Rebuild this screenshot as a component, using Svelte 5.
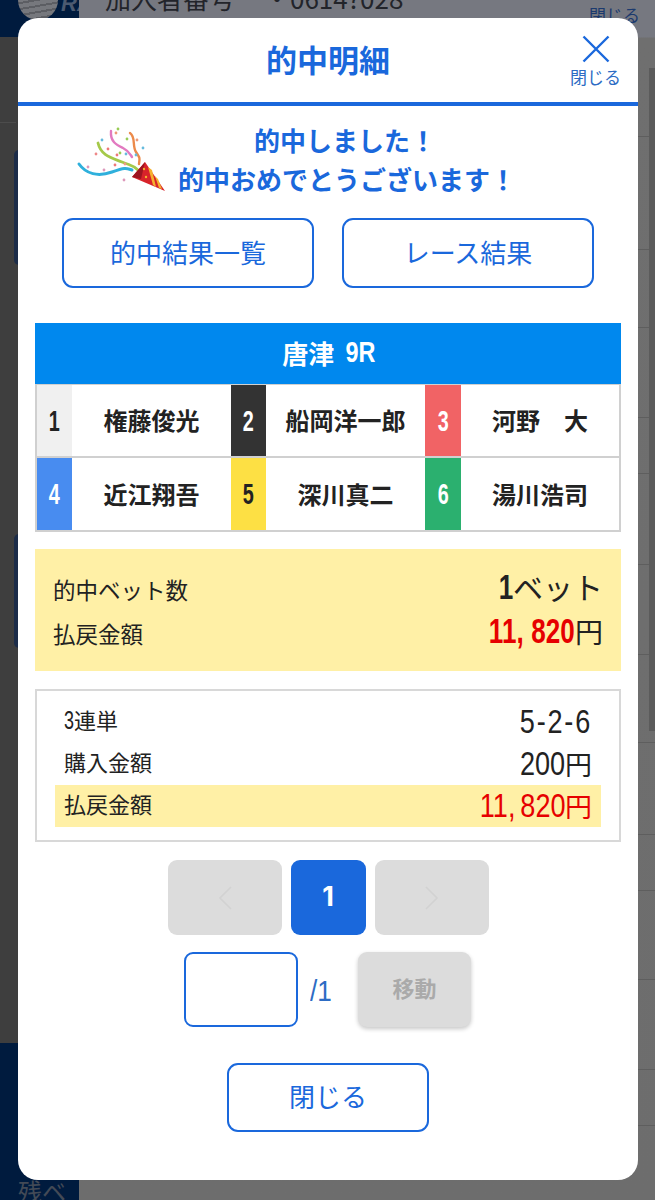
<script>
  const racers = [
    { no: 1, name: '権藤俊光', cls: 'c1' },
    { no: 2, name: '船岡洋一郎', cls: 'c2' },
    { no: 3, name: '河野　大', cls: 'c3' },
    { no: 4, name: '近江翔吾', cls: 'c4' },
    { no: 5, name: '深川真二', cls: 'c5' },
    { no: 6, name: '湯川浩司', cls: 'c6' },
  ];
  const confetti = [
    [36, 39, '#e88'], [42, 25, '#6bd'], [48, 34, '#e77'], [58, 14, '#9c5'], [57, 40, '#e77'],
    [28, 52, '#d9b'], [44, 55, '#d9b'], [64, 65, '#d9b'], [55, 50, '#e77'], [65, 49, '#e98'],
    [60, 38, '#9c5'], [67, 24, '#9c5'], [66, 39, '#6bd'], [76, 40, '#6bd'], [83, 33, '#6bd'],
    [56, 18, '#e97'], [77, 25, '#e97'],
  ];
  const lines = [136, 249, 327, 417, 473, 564, 654, 742, 834, 890, 979, 1069, 1125];
</script>

<div class="page">
  <div class="rail">
    <div class="rail-top">
      <span class="logo"></span>
      <span class="logo-text">RA</span>
    </div>
    <div class="rail-mid">
      <i class="edge e1"></i>
      <i class="edge e2"></i>
      <i class="rail-rule"></i>
    </div>
    <div class="rail-foot"><span class="foot-text">残ベ</span></div>
  </div>
  <div class="main">
    <div class="main-top">
      <span class="member">加入者番号</span>
      <span class="member-no">・0614?028</span>
      <span class="back-close">閉じる</span>
    </div>
    {#each lines as y}
      <i class="rule" style="top:{y}px"></i>
    {/each}
    <i class="side-panel"></i>
  </div>
</div>

<div class="modal">
  <header class="head">
    <h1>的中明細</h1>
    <button class="x">
      <svg width="30" height="30" viewBox="0 0 30 30" aria-hidden="true">
        <path d="M2.5 2.5 27.5 27.5M27.5 2.5 2.5 27.5" fill="none" stroke="#1a68dc" stroke-width="2.4" />
      </svg>
      <span>閉じる</span>
    </button>
  </header>

  <div class="body">
    <div class="congrats">
      <svg class="popper" width="118" height="85" viewBox="0 0 118 85" aria-hidden="true">
        <g fill="none" stroke-width="2.4" stroke-linecap="round">
          <path d="M19 49C26 59 38 62 52 57S66 53 72 55" stroke="#2fb0dc" stroke-width="3" />
          <path d="M38 28C41 41 52 43 62 47S73 50 78 55" stroke="#a5c94a" stroke-width="2.8" />
          <path d="M51 16C50 27 57 30 63 33S70 39 72 42" stroke="#e27ac0" />
          <path d="M70 18C76 22 72 31 76 37S80 43 79 49" stroke="#ec8a4a" />
        </g>
        {#each confetti as [x, y, fill]}
          <circle cx={x} cy={y} r="1.4" {fill} />
        {/each}
        <path d="M72 62 85 47 105 76Z" fill="#d8232a" />
        <path d="M72 62 85 47 81 64Z" fill="#9e1420" />
        <path d="M88 52 92 55 96 72 93 70ZM95 61 98 64 102 74 99 73Z" fill="#f5b12e" />
        <circle cx="84" cy="54" r="1.2" fill="#f5b12e" />
        <circle cx="86" cy="62" r="1.2" fill="#f5b12e" />
      </svg>
      <p>的中しました！<br />的中おめでとうございます！</p>
    </div>

    <div class="links">
      <button class="outline">的中結果一覧</button>
      <button class="outline">レース結果</button>
    </div>

    <div class="race">唐津<span class="narrow race-no">9R</span></div>
    <div class="racers">
      {#each racers as r}
        <div class="no {r.cls}"><span class="narrow">{r.no}</span></div>
        <div class="name">{r.name}</div>
      {/each}
    </div>

    <div class="summary">
      <div class="line">
        <span>的中ベット数</span>
        <span class="big"><b class="narrow one">1</b>ベット</span>
      </div>
      <div class="line">
        <span>払戻金額</span>
        <span class="big"><b class="narrow red">11<i class="comma">,</i>820</b><span class="yen">円</span></span>
      </div>
    </div>

    <div class="detail">
      <div class="row"><span class="label"><span class="narrow three">3</span>連単</span><span class="val"><span class="narrow combo">5-2-6</span></span></div>
      <div class="row"><span class="label">購入金額</span><span class="val"><span class="narrow">200</span>円</span></div>
      <div class="row hit"><span class="label">払戻金額</span><span class="val red"><span class="narrow">11<i class="comma thin">,</i>820</span>円</span></div>
    </div>

    <div class="pager">
      <button class="pg wide" aria-label="前へ">
        <svg width="16" height="26" viewBox="0 0 16 26"><path d="M14 2 3 13 14 24" fill="none" stroke="#d2d2d2" stroke-width="1.6" /></svg>
      </button>
      <button class="pg cur">1</button>
      <button class="pg wide" aria-label="次へ">
        <svg width="16" height="26" viewBox="0 0 16 26"><path d="M2 2 13 13 2 24" fill="none" stroke="#d2d2d2" stroke-width="1.6" /></svg>
      </button>
    </div>

    <div class="jump">
      <input type="text" aria-label="ページ" />
      <span class="total"><span class="narrow">/1</span></span>
      <button class="go">移動</button>
    </div>

    <button class="outline close">閉じる</button>
  </div>
</div>

<style>
  :global(body) {
    margin: 0;
    background: #6b6b6b;
    font-family: "Noto Sans CJK JP", "Noto Sans", sans-serif;
  }

  .page {
    display: flex;
    width: 655px;
    height: 1200px;
    overflow: hidden;
  }

  .rail {
    width: 79px;
    display: flex;
    flex-direction: column;
    flex: none;
  }
  .rail-top {
    position: relative;
    height: 37px;
    background: #001b3e;
    overflow: hidden;
  }
  .logo {
    position: absolute;
    left: 18px;
    top: -20px;
    width: 40px;
    height: 40px;
    border-radius: 50%;
    background: repeating-linear-gradient(170deg, #76787d 0 4px, #5c5e63 4px 6px);
  }
  .logo-text {
    position: absolute;
    left: 61px;
    top: -9px;
    color: #4c5a70;
    font: italic 700 22px "Liberation Sans", sans-serif;
  }
  .rail-mid {
    position: relative;
    flex: 1;
    background: #3e3e3e;
  }
  .rail-rule {
    position: absolute;
    left: 0;
    width: 16px;
    top: 85px;
    height: 1px;
    background: #4c4c4c;
  }
  .edge {
    position: absolute;
    left: 14px;
    width: 6px;
    border-radius: 5px 0 0 5px;
    background: #1c2c48;
  }
  .e1 { top: 113px; height: 115px; }
  .e2 { top: 497px; height: 114px; }
  .rail-foot {
    height: 157px;
    background: #001b3e;
    position: relative;
    overflow: hidden;
  }
  .foot-text {
    position: absolute;
    left: 18px;
    bottom: -8px;
    color: #434a56;
    font-size: 24px;
  }

  .main {
    flex: 1;
    position: relative;
    background: linear-gradient(#767880 0, #767880 37px, #6f6f6f 38px, #6d6d6d 100%);
  }
  .main-top {
    height: 37px;
    position: relative;
    overflow: hidden;
  }
  .member, .member-no {
    position: absolute;
    top: -21px;
    font-size: 26px;
    color: #22242a;
    white-space: nowrap;
  }
  .member { left: 26px; }
  .member-no { left: 185px; }
  .back-close {
    position: absolute;
    right: 15px;
    top: 2px;
    font-size: 17px;
    color: #1c3a6e;
  }
  .rule {
    position: absolute;
    left: 0;
    right: 0;
    height: 1px;
    background: #5e5e5e;
  }
  .side-panel {
    position: absolute;
    right: 0;
    top: 68px;
    width: 6px;
    height: 663px;
    background: #5b5b5b;
  }

  .modal {
    position: absolute;
    left: 18px;
    top: 18px;
    width: 620px;
    height: 1162px;
    background: #fff;
    border-radius: 20px;
    overflow: hidden;
  }

  .head {
    position: relative;
    height: 84px;
    border-bottom: 4px solid #1a68dc;
    display: flex;
    align-items: center;
    justify-content: center;
  }
  h1 {
    margin: 0 0 4px;
    font-size: 31px;
    font-weight: 700;
    color: #1a68dc;
  }
  .x {
    position: absolute;
    right: 17px;
    top: 16px;
    padding: 0;
    border: 0;
    background: none;
    display: flex;
    flex-direction: column;
    align-items: center;
    gap: 3px;
    font-family: inherit;
    font-size: 17px;
    line-height: 20px;
    color: #2d6cc4;
  }

  .body {
    padding: 0 17px;
    display: flex;
    flex-direction: column;
    align-items: stretch;
  }

  .congrats {
    display: flex;
    align-items: flex-start;
    padding: 14px 0 0 25px;
    height: 94px;
  }
  .popper {
    margin-top: -5px;
    flex: none;
  }
  .congrats p {
    margin: 0;
    width: 334px;
    text-align: center;
    font-size: 26px;
    line-height: 39px;
    font-weight: 700;
    color: #1a68dc;
    white-space: nowrap;
  }

  .links {
    display: flex;
    justify-content: center;
    gap: 28px;
    margin-top: 4px;
  }
  .outline {
    box-sizing: border-box;
    width: 252px;
    height: 70px;
    border: 2px solid #1a68dc;
    border-radius: 11px;
    background: #fff;
    color: #1a68dc;
    font-family: inherit;
    font-size: 26px;
    padding: 0 0 4px;
  }

  .race {
    box-sizing: border-box;
    margin-top: 35px;
    height: 61px;
    padding: 0 0 3px 2px;
    background: #0088ee;
    color: #fff;
    font-size: 26px;
    font-weight: 700;
    display: flex;
    align-items: center;
    justify-content: center;
  }
  .race-no {
    font-size: 30px;
    margin-left: 3px;
    transform: scaleX(0.66);
  }

  /* no condensed face is installed, so digits are squeezed to the reference's width */
  .narrow {
    display: inline-block;
    font-family: "Liberation Sans", sans-serif;
    font-style: normal;
    transform: scaleX(0.78);
    transform-origin: right center;
  }
  .comma {
    font-style: normal;
    margin-right: 10px;
  }
  .comma.thin {
    margin-right: 6px;
  }

  .racers {
    display: grid;
    grid-template-columns: 35px 159px 35px 159px 36px 1fr;
    grid-template-rows: 71px 72px;
    row-gap: 2px;
    border: 2px solid #d0d0d0;
    border-top-width: 1px;
    background: #d0d0d0;
  }
  .no {
    display: flex;
    align-items: center;
    justify-content: center;
    font-size: 30px;
    font-weight: 700;
  }
  .no .narrow {
    transform: scaleX(0.66);
    transform-origin: center;
  }
  .c1 { background: #f0f0f0; color: #222; }
  .c2 { background: #333; color: #fff; }
  .c3 { background: #f16365; color: #fff; }
  .c4 { background: #488cf0; color: #fff; }
  .c5 { background: #fde044; color: #222; }
  .c6 { background: #2bb06f; color: #fff; }
  .name {
    background: #fff;
    display: flex;
    align-items: center;
    justify-content: center;
    padding-bottom: 2px;
    font-size: 24px;
    font-weight: 700;
    color: #222;
    white-space: nowrap;
  }

  .summary {
    margin-top: 17px;
    height: 122px;
    box-sizing: border-box;
    background: #fff0a6;
    padding: 18px 18px 0;
    color: #222;
    font-size: 22.5px;
  }
  .line {
    display: flex;
    align-items: center;
    justify-content: space-between;
    height: 44px;
  }
  .big {
    font-size: 30px;
    line-height: 44px;
    white-space: nowrap;
    margin-top: -5px;
  }
  .big b {
    font-size: 34.5px;
    line-height: 44px;
    transform: scaleX(0.755);
  }
  .yen {
    font-size: 28px;
  }
  .red { color: #e60000; }

  .detail {
    margin-top: 18px;
    height: 153px;
    box-sizing: border-box;
    border: 2px solid #d8d8d8;
    padding: 10px 18px 0;
    color: #222;
    font-size: 22px;
  }
  .row {
    display: flex;
    align-items: center;
    justify-content: space-between;
    height: 42px;
    padding: 0 9px;
  }
  .row.hit {
    background: #fff0a6;
  }
  .label {
    margin-top: -6px;
    white-space: nowrap;
  }
  .three {
    font-size: 25px;
    line-height: 25px;
    transform: scaleX(0.72);
    margin-left: -4px;
  }
  .val {
    font-size: 27px;
    line-height: 42px;
    white-space: nowrap;
  }
  .val .narrow {
    font-size: 33px;
    line-height: 42px;
    transform: scaleX(0.82);
  }
  .val .combo {
    letter-spacing: 2.2px;
  }

  .pager {
    display: flex;
    justify-content: center;
    gap: 9px;
    margin-top: 18px;
  }
  .pg {
    height: 75px;
    width: 75px;
    border: 0;
    border-radius: 9px;
    padding: 0;
    display: flex;
    align-items: center;
    justify-content: center;
  }
  .pg.wide {
    width: 114px;
    background: #dcdcdc;
  }
  .pg.cur {
    background: #1a68dc;
    color: #fff;
    padding-bottom: 3px;
    font: 700 27px "Inter", sans-serif;
  }

  .jump {
    display: flex;
    align-items: center;
    margin: 17px 0 0 149px;
  }
  .jump input {
    box-sizing: border-box;
    width: 114px;
    height: 75px;
    border: 2px solid #1a68dc;
    border-radius: 9px;
    background: #fff;
    padding: 0;
  }
  .total {
    width: 60px;
    padding: 0 0 3px 12px;
    box-sizing: border-box;
    font-size: 29px;
    color: #2d6cc4;
  }
  .total .narrow {
    transform: scaleX(0.9);
    transform-origin: left center;
  }
  .go {
    width: 113px;
    height: 75px;
    border: 0;
    border-radius: 9px;
    background: #dcdcdc;
    box-shadow: 0 2px 4px rgba(0, 0, 0, 0.22);
    color: #aaa;
    font-family: inherit;
    font-size: 22px;
    font-weight: 700;
    padding: 0 0 5px;
  }

  .close {
    width: 202px;
    height: 69px;
    align-self: center;
    margin-top: 36px;
  }
</style>
